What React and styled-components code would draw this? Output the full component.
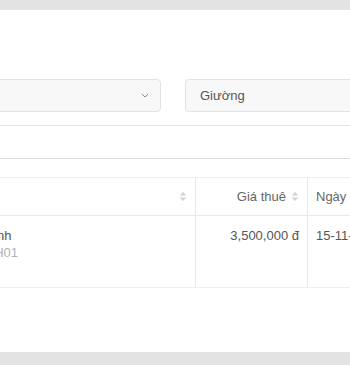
import styled, { createGlobalStyle } from "styled-components";

const GlobalStyle = createGlobalStyle`
  html, body {
    margin: 0;
    padding: 0;
    background: #e3e3e3;
    overflow: hidden;
  }
  body {
    font-family: "Liberation Sans", Arial, sans-serif;
    font-size: 13px;
    color: #555;
  }
`;

const Page = styled.div`
  padding: 10px 0 13px;
  width: 350px;
  overflow: hidden;
`;

const Card = styled.div`
  background: #fff;
  height: 342px;
  width: 520px;
  margin-left: -80px;
  padding: 69px 0 0 20px;
  box-sizing: border-box;
`;

const FilterRow = styled.div`
  display: flex;
  gap: 24px;
`;

const Select = styled.div`
  box-sizing: border-box;
  width: ${(p) => p.$width}px;
  height: 33px;
  border: 1px solid #e2e2e4;
  border-radius: 4px;
  background: #f8f8f9;
  display: flex;
  align-items: center;
  justify-content: space-between;
  padding: 0 11px 0 14px;
  color: #555;
  font-size: 13px;
`;

const Band = styled.div`
  margin-top: 13px;
  height: 32px;
  border-top: 1px solid #e4e4e8;
  border-bottom: 1px solid #dcdce2;
`;

const Table = styled.div`
  margin-top: 18px;
  border-top: 1px solid #f0f0f4;
  display: grid;
  grid-template-columns: 256px 112px 1fr;
`;

const HeadCell = styled.div`
  height: 37px;
  border-bottom: 1px solid #e8e8ef;
  border-right: ${(p) => (p.$last ? "none" : "1px solid #e8e8ef")};
  display: flex;
  align-items: center;
  justify-content: ${(p) => (p.$align === "right" ? "flex-end" : "flex-start")};
  gap: 5px;
  padding: 0 8px;
  color: #666;
`;

const Cell = styled.div`
  height: 72px;
  border-bottom: 1px solid #eeeef3;
  border-right: ${(p) => (p.$last ? "none" : "1px solid #e8e8ef")};
  padding: 11px 8px 0 ${(p) => p.$padLeft ?? 8}px;
  box-sizing: border-box;
  text-align: ${(p) => p.$align || "left"};
  color: #555;
  line-height: 17px;
`;

const Name = styled.div`
  color: #555;
`;

const Code = styled.div`
  color: #b0b0b4;
`;

const Spacer = styled.div`
  flex: 1;
`;

function SortIcon() {
  return (
    <svg width="8" height="11" viewBox="0 0 8 11">
      <path d="M4 1 L7.5 4.5 H0.5 Z" fill="#d4d4d8" />
      <path d="M4 10 L7.5 6.5 H0.5 Z" fill="#d4d4d8" />
    </svg>
  );
}

function Chevron() {
  return (
    <svg width="8" height="5" viewBox="0 0 8 5">
      <path d="M0.8 1 L4 4 L7.2 1" fill="none" stroke="#888" strokeWidth="1" />
    </svg>
  );
}

export default function App() {
  return (
    <Page>
      <GlobalStyle />
      <Card>
        <FilterRow>
          <Select $width={221}>
            <span />
            <Chevron />
          </Select>
          <Select $width={220}>Giường</Select>
        </FilterRow>
        <Band />
        <Table>
          <HeadCell>
            <Spacer />
            <SortIcon />
          </HeadCell>
          <HeadCell $align="right">
            Giá thuê
            <SortIcon />
          </HeadCell>
          <HeadCell $last>Ngày</HeadCell>
          <Cell $padLeft={0}>
            <Name>Phòng Xanh</Name>
            <Code>Mã: PX1-H01</Code>
          </Cell>
          <Cell $align="right">3,500,000 đ</Cell>
          <Cell $last>15-11-2023</Cell>
        </Table>
      </Card>
    </Page>
  );
}
